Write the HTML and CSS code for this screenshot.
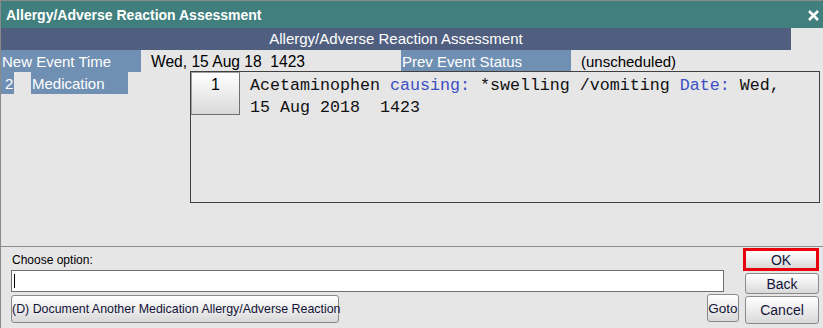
FILE: index.html
```html
<!DOCTYPE html>
<html lang="en">
<head>
  <meta charset="UTF-8" />
  <title>Allergy/Adverse Reaction Assessment</title>
  <link rel="stylesheet" href="styles.css">
</head>
<body>

  <div class="window">
    <div class="titlebar">
      <span class="title">Allergy/Adverse Reaction Assessment</span>
      <svg class="close" width="13" height="13" viewBox="0 0 13 13">
        <path d="M2 2 L11 11 M11 2 L2 11" stroke="#fff" stroke-width="2.6" fill="none"/>
      </svg>
    </div>

    <div class="band">Allergy/Adverse Reaction Assessment</div>

    <div class="info-row">
      <div class="label label-event">New Event Time</div>
      <div class="value value-event">Wed, 15 Aug 18&nbsp; 1423</div>
      <div class="label label-status">Prev Event Status</div>
      <div class="value">(unscheduled)</div>
    </div>

    <div class="record-row">
      <div class="label label-num">2</div>
      <div class="label label-med">Medication</div>
      <div class="record">
        <button class="btn btn-index">1</button>
        <div class="record-text">Acetaminophen <span class="key">causing:</span> *swelling /vomiting <span class="key">Date:</span> Wed, 15 Aug 2018&nbsp; 1423</div>
      </div>
    </div>

    <div class="footer">
      <div class="footer-main">
        <div class="prompt">Choose option:</div>
        <div class="option-input"><span class="caret"></span></div>
        <div class="footer-actions">
          <button class="btn btn-doc">(D) Document Another Medication Allergy/Adverse Reaction</button>
          <button class="btn btn-goto">Goto</button>
        </div>
      </div>
      <div class="footer-side">
        <button class="btn btn-ok">OK</button>
        <button class="btn btn-back">Back</button>
        <button class="btn btn-cancel">Cancel</button>
      </div>
    </div>
  </div>

</body>
</html>
```

FILE: styles.css
```css
body {
  margin: 0;
  font-family: 'Liberation Sans', Arial, sans-serif;
  background: #e6e6e6;
}
.window {
  width: 823px;
  height: 328px;
  box-sizing: border-box;
  border-left: 1px solid #8a8a8a;
  overflow: hidden;
}
.titlebar {
  height: 27px;
  border-top: 1px solid #8a8a8a;
  background: #407f7e;
  color: #fff;
  display: flex;
  align-items: center;
  justify-content: space-between;
  padding: 0 3px 0 5px;
}
.title {
  font-weight: bold;
  font-size: 14px;
  padding-top: 1px;
}
.close {
  margin-top: 1px;
}
.band {
  width: 790px;
  height: 22px;
  line-height: 22px;
  background: #505f80;
  color: #fff;
  font-size: 15px;
  text-align: center;
}
.info-row {
  display: flex;
  height: 22px;
}
.label {
  background: #7090b3;
  color: #fff;
  font-size: 15px;
  line-height: 23px;
  height: 22px;
  box-sizing: border-box;
}
.value {
  font-size: 15px;
  line-height: 23px;
  color: #000;
  padding-left: 10px;
}
.label-event {
  width: 140px;
  padding-left: 1px;
}
.value-event {
  width: 250px;
  font-size: 15.6px;
}
.label-status {
  width: 170px;
  padding-left: 1px;
}
.record-row {
  display: flex;
  align-items: flex-start;
}
.label-num {
  width: 13px;
  padding-left: 4px;
}
.label-med {
  width: 97px;
  margin-left: 17px;
  padding-left: 1px;
}
.record {
  margin-left: 62px;
  margin-top: -1px;
  width: 630px;
  height: 132px;
  box-sizing: border-box;
  border: 1px solid #404040;
  display: flex;
  align-items: flex-start;
}
.record-text {
  width: 545px;
  margin-left: 10px;
  font-family: 'Liberation Mono', 'Courier New', monospace;
  font-size: 16.67px;
  line-height: 22px;
  color: #111;
  padding-top: 3px;
}
.key {
  color: #3d4fc4;
}
.btn {
  font-family: 'Liberation Sans', Arial, sans-serif;
  background: linear-gradient(#ffffff, #e9e9e9 60%, #d8d8d8);
  border: 1px solid #8a8a8a;
  border-radius: 3px;
  color: #141438;
  padding: 0;
  box-sizing: border-box;
  white-space: nowrap;
}
.btn-index {
  width: 49px;
  height: 43px;
  font-size: 16px;
  color: #000;
  border-radius: 0;
  border-color: #a0a0a0 #707070 #707070 #a0a0a0;
  line-height: 18px;
  padding-bottom: 17px;
}
.footer {
  margin-top: 43px;
  border-top: 1px solid #8c8c8c;
  display: flex;
  padding-top: 1px;
}
.footer-main {
  width: 728px;
  padding-left: 10px;
}
.prompt {
  height: 22px;
  line-height: 24px;
  font-size: 12px;
  color: #000;
  padding-left: 1px;
}
.option-input {
  display: flex;
  align-items: center;
  width: 713px;
  height: 22px;
  box-sizing: border-box;
  border: 1px solid #707070;
  background: #fff;
  padding: 0 2px;
}
.caret {
  width: 1px;
  height: 14px;
  background: #000;
}
.footer-actions {
  display: flex;
  justify-content: space-between;
  align-items: flex-start;
  margin-top: 2px;
}
.btn-doc {
  width: 328px;
  height: 28px;
  font-size: 12.4px;
  margin-top: 1px;
}
.btn-goto {
  width: 32px;
  height: 28px;
  font-size: 13.5px;
}
.footer-side {
  margin-left: 4px;
  width: 76px;
  display: flex;
  flex-direction: column;
  align-items: flex-end;
  gap: 2px;
}
.btn-ok {
  width: 76px;
  height: 23px;
  border: 3px solid #e8000a;
  border-radius: 0;
  font-size: 14px;
}
.btn-back {
  width: 74px;
  height: 21px;
  font-size: 14px;
}
.btn-cancel {
  width: 74px;
  height: 28px;
  font-size: 14px;
}
```
